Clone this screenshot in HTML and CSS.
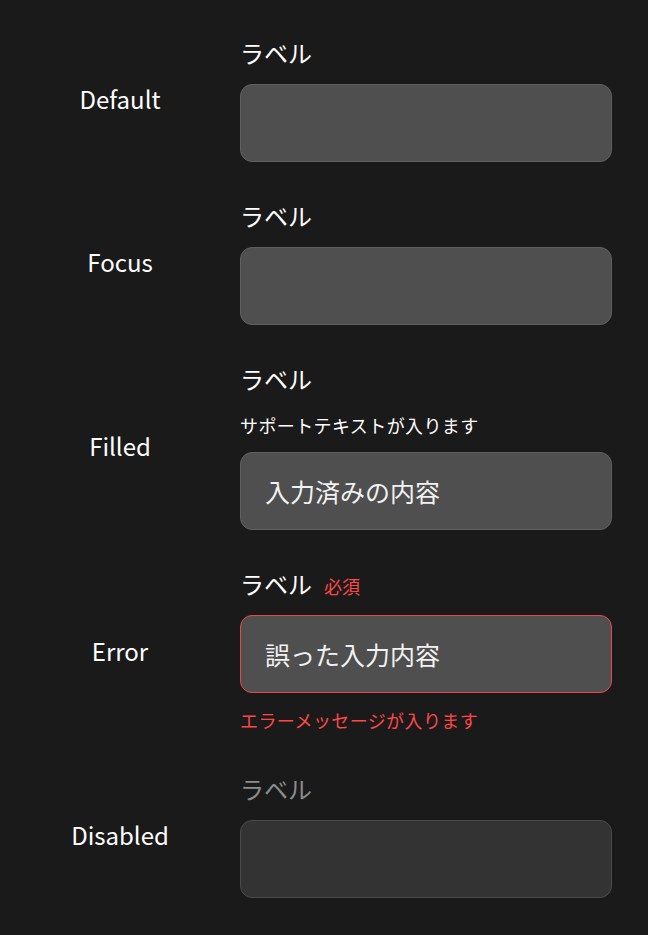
FILE: index.html
```html
<!DOCTYPE html>
<html lang="ja">
<head>
<meta charset="utf-8">
<link rel="stylesheet" href="styles.css">
</head>
<body>
<main class="page">
  <section class="row">
    <div class="state">Default</div>
    <div class="field">
      <div class="label">ラベル</div>
      <div class="input"></div>
    </div>
  </section>
  <section class="row">
    <div class="state">Focus</div>
    <div class="field">
      <div class="label">ラベル</div>
      <div class="input"></div>
    </div>
  </section>
  <section class="row">
    <div class="state">Filled</div>
    <div class="field">
      <div class="label">ラベル</div>
      <div class="support">サポートテキストが入ります</div>
      <div class="input">入力済みの内容</div>
    </div>
  </section>
  <section class="row">
    <div class="state">Error</div>
    <div class="field">
      <div class="label">ラベル<span class="required">必須</span></div>
      <div class="input input-error">誤った入力内容</div>
      <div class="error-msg">エラーメッセージが入ります</div>
    </div>
  </section>
  <section class="row">
    <div class="state">Disabled</div>
    <div class="field">
      <div class="label label-disabled">ラベル</div>
      <div class="input input-disabled"></div>
    </div>
  </section>
</main>
</body>
</html>
```
FILE: styles.css
```css
html, body {
  margin: 0;
  padding: 0;
  background: #1a1a1a;
}
body {
  font-family: "Noto Sans CJK JP", "Noto Sans", sans-serif;
  color: #ffffff;
}
.page {
  display: flex;
  flex-direction: column;
  gap: 37px;
  padding: 36px 36px 0 0;
}
.row {
  display: flex;
  align-items: center;
}
.state {
  width: 240px;
  flex: none;
  text-align: center;
  font-size: 24px;
  line-height: 34px;
}
.field {
  flex: 1;
  display: flex;
  flex-direction: column;
}
.label {
  font-size: 24px;
  line-height: 34px;
  height: 34px;
  margin-bottom: 14px;
}
.required {
  color: #ff4747;
  font-size: 18px;
  line-height: 1;
  margin-left: 12px;
  vertical-align: baseline;
}
.label-disabled {
  color: #8c8c8c;
}
.support {
  font-size: 18px;
  letter-spacing: 0.4px;
  line-height: 26px;
  margin-top: 2px;
  margin-bottom: 14px;
}
.input {
  box-sizing: border-box;
  height: 78px;
  background: #4f4f4f;
  border: 1px solid #5f5f5f;
  border-radius: 12px;
  padding: 0 24px;
  display: flex;
  align-items: center;
  font-size: 25px;
  color: #f2f2f2;
}
.input-error {
  border-color: #e8484c;
}
.input-disabled {
  background: #333333;
  border-color: #4a4a4a;
}
.error-msg {
  color: #ff4747;
  font-size: 18px;
  letter-spacing: 0.4px;
  line-height: 30px;
  margin-top: 12px;
}
```
